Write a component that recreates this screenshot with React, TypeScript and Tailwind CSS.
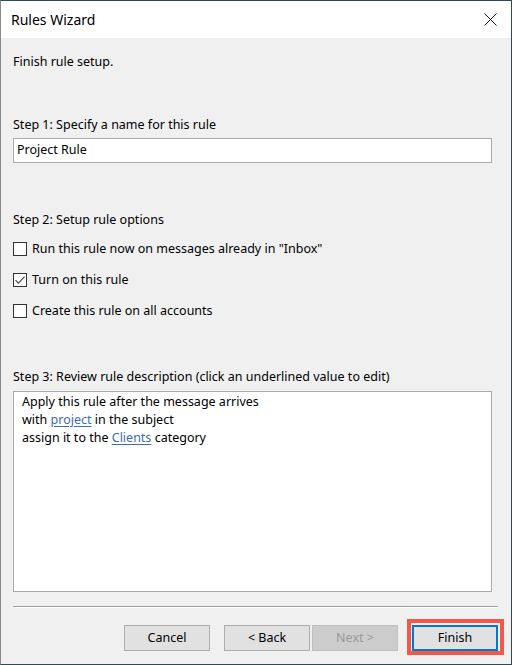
import React from "react";

const font = { fontFamily: '"Noto Sans", "Open Sans", sans-serif' };

function CheckBox({ checked, label }: { checked?: boolean; label: string }) {
  return (
    <div className="flex h-4 items-center">
      <div className="flex h-[14px] w-[14px] items-center justify-center border border-[#333333] bg-white">
        {checked && (
          <svg width="12" height="12" viewBox="0 0 12 12">
            <path d="M1.5 6.2 L4.4 9.2 L10.6 2.6" fill="none" stroke="#444" strokeWidth="1.1" />
          </svg>
        )}
      </div>
      <span className="ml-[5px]">{label}</span>
    </div>
  );
}

function Btn({ children, disabled }: { children: React.ReactNode; disabled?: boolean }) {
  return (
    <button
      className={
        disabled
          ? "flex h-[26px] w-[86px] items-center justify-center border border-[#bfbfbf] bg-[#cccccc] text-[#9a9a9a]"
          : "flex h-[26px] w-[86px] items-center justify-center border border-[#adadad] bg-[#e1e1e1] text-black"
      }
    >
      {children}
    </button>
  );
}

export default function App() {
  return (
    <div
      className="flex h-[665px] w-[512px] flex-col border-t border-r border-b border-l border-t-[#2e4b55] border-r-[#2e4b55] border-b-[#2e4b55] border-l-[#8a8a8a] bg-[#f0f0f0] text-[12.5px] text-black"
      style={font}
    >
      {/* title bar */}
      <div className="flex h-[37px] items-center justify-between bg-white pl-[10px] pr-[14px]">
        <span className="text-[14px]">Rules Wizard</span>
        <svg width="13" height="13" viewBox="0 0 13 13">
          <path d="M0.5 0.5 L12.5 12.5 M12.5 0.5 L0.5 12.5" stroke="#111" strokeWidth="1" />
        </svg>
      </div>

      <div className="flex flex-1 flex-col pl-[12px] pr-[13px]">
        <div className="mt-[16px] h-4 leading-4">Finish rule setup.</div>

        <div className="mt-[47px] h-4 leading-4">Step 1: Specify a name for this rule</div>
        <div className="mr-[6px] mt-[5px] flex h-[25px] items-center border border-[#aaaaaa] bg-white px-[3px]">
          Project Rule
        </div>

        <div className="mt-[49px] h-4 leading-4">Step 2: Setup rule options</div>
        <div className="mt-[13px] flex flex-col gap-[15px]">
          <CheckBox label='Run this rule now on messages already in "Inbox"' />
          <CheckBox checked label="Turn on this rule" />
          <CheckBox label="Create this rule on all accounts" />
        </div>

        <div className="mt-[50px] h-4 leading-4">
          Step 3: Review rule description (click an underlined value to edit)
        </div>
        <div className="mr-[6px] mt-[6px] h-[201px] border border-[#aaaaaa] bg-white pl-[8px] pt-[1px] leading-[18px]">
          <div>Apply this rule after the message arrives</div>
          <div>
            with <span className="text-[#3d6db5] underline underline-offset-2">project</span> in the subject
          </div>
          <div>
            assign it to the <span className="text-[#3d6db5] underline underline-offset-2">Clients</span> category
          </div>
        </div>

        <div className="mt-[14px] h-[2px] border-t border-b border-t-[#a0a0a0] border-b-white" />

        <div className="mt-[17px] flex justify-end">
          <Btn>Cancel</Btn>
          <div className="ml-[14px]">
            <Btn>&lt; Back</Btn>
          </div>
          <div className="ml-[2px]">
            <Btn disabled>Next &gt;</Btn>
          </div>
          <div className="relative ml-[14px]">
            <button className="flex h-[26px] w-[86px] items-center justify-center border-2 border-[#0078d7] bg-[#e1e1e1]">
              Finish
            </button>
            <div className="absolute -bottom-[4px] -left-[5px] -right-[6px] -top-[6px] border-4 border-[#f4584b]" />
          </div>
        </div>
      </div>
    </div>
  );
}
